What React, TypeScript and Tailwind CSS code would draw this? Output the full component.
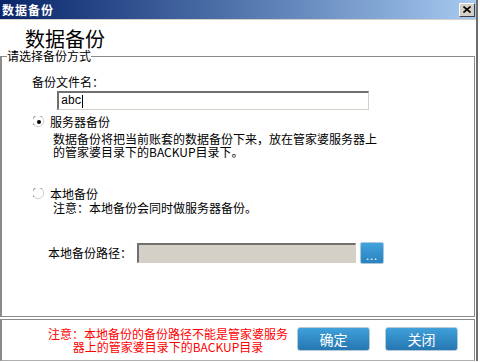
import React from "react";

function Radio({ checked }: { checked?: boolean }) {
  return (
    <svg width="12" height="12" viewBox="0 0 12 12" className="shrink-0">
      <circle cx="6" cy="6" r="5.5" fill="#ffffff" />
      <path d="M1 9 A5.5 5.5 0 0 1 9 1" fill="none" stroke="#808080" strokeWidth="1" />
      <path d="M9 1 A5.5 5.5 0 0 1 1 9" fill="none" stroke="#d4d0c8" strokeWidth="1" />
      {checked && <circle cx="6" cy="6" r="2" fill="#000000" />}
    </svg>
  );
}

export default function App() {
  return (
    <div className="w-[480px] h-[362px] bg-white text-black text-[12px] leading-[12px] font-['Noto_Sans_CJK_SC',sans-serif]">
      <div className="w-[478px] h-[361px] border-r-2 border-r-[#6e6e6e] flex flex-col">
        {/* Title bar */}
        <div className="h-[19px] flex items-center justify-between pl-[2px] pr-[1px] bg-linear-to-r from-[#0a246a] to-[#a6caf0]">
          <span className="text-white font-bold text-[12px] leading-[19px] tracking-[1px]">数据备份</span>
          <div className="w-[16px] h-[14px] bg-[#d4d0c8] border-t border-l border-t-white border-l-white border-r border-b border-r-[#404040] border-b-[#404040] flex items-center justify-center">
            <svg width="8" height="7" viewBox="0 0 8 7">
              <path d="M0.5 0.5 L7.5 6.5 M7.5 0.5 L0.5 6.5" stroke="#000" strokeWidth="1.6" />
            </svg>
          </div>
        </div>
        <div className="h-px bg-[#d4d0c8]" />

        {/* Header */}
        <div className="h-[30px] pt-[9px] pl-[25px] text-[20px] leading-[20px]">数据备份</div>

        {/* Group box */}
        <fieldset className="w-[475px] h-[267px] border border-l-2 border-[#8a8a8a]">
          <legend className="ml-[5px] leading-[12px]">请选择备份方式</legend>

          <div className="ml-[30px] mt-[14px]">备份文件名：</div>
          <div className="ml-[55px] mt-[3px] w-[312px] h-[19px] flex items-center pl-[2px] border-t-2 border-l-2 border-t-[#707070] border-l-[#707070] border-r border-b border-r-[#d4d0c8] border-b-[#d4d0c8]">
            <span className="text-[12px] leading-[12px] font-['Liberation_Mono',monospace] tracking-[-0.5px]">abc</span>
            <span className="w-px h-[13px] bg-black ml-px" />
          </div>

          <div className="ml-[31px] mt-[6px] h-[12px] flex items-center gap-[5px]">
            <Radio checked />
            <span>服务器备份</span>
          </div>
          <div className="ml-[51px] mt-[4px] leading-[13px]">
            数据备份将把当前账套的数据备份下来，放在管家婆服务器上
            <br />
            的管家婆目录下的BACKUP目录下。
          </div>

          <div className="ml-[31px] mt-[30px] h-[12px] flex items-center gap-[5px]">
            <Radio />
            <span>本地备份</span>
          </div>
          <div className="ml-[51px] mt-[2px]">注意：本地备份会同时做服务器备份。</div>

          <div className="ml-[46px] mt-[28px] h-[22px] flex items-center">
            <span className="w-[89px]">本地备份路径：</span>
            <div className="w-[219px] h-[20px] bg-[#d4d0c8] border-t-2 border-l-2 border-t-[#707070] border-l-[#707070] border-r border-b border-r-[#d4d0c8] border-b-[#d4d0c8]" />
            <button className="ml-[4px] w-[24px] h-[22px] rounded-[2px] bg-linear-to-b from-[#41a2dc] to-[#2a82bf] border border-[#a9c7dd] text-white text-[11px] leading-[11px] pt-[4px] tracking-[1px]">
              ...
            </button>
          </div>
        </fieldset>

        {/* Bottom panel */}
        <div className="mt-[2px] w-[475px] h-[42px] border border-l-2 border-[#8a8a8a] border-b-[#b0b0b0] flex items-start">
          <div className="ml-[46px] mt-[7px] w-[240px] text-center text-[#ff0000] leading-[13px]">
            注意：本地备份的备份路径不能是管家婆服务
            <br />
            器上的管家婆目录下的BACKUP目录
          </div>
          <button className="ml-[9px] mt-[7px] w-[73px] h-[24px] rounded-[3px] bg-linear-to-b from-[#3fa0da] to-[#2677b2] border border-[#b6c9d8] text-white text-[14px] leading-[14px]">
            确定
          </button>
          <button className="ml-[15px] mt-[7px] w-[73px] h-[24px] rounded-[3px] bg-linear-to-b from-[#3fa0da] to-[#2677b2] border border-[#b6c9d8] text-white text-[14px] leading-[14px]">
            关闭
          </button>
        </div>
      </div>
    </div>
  );
}
